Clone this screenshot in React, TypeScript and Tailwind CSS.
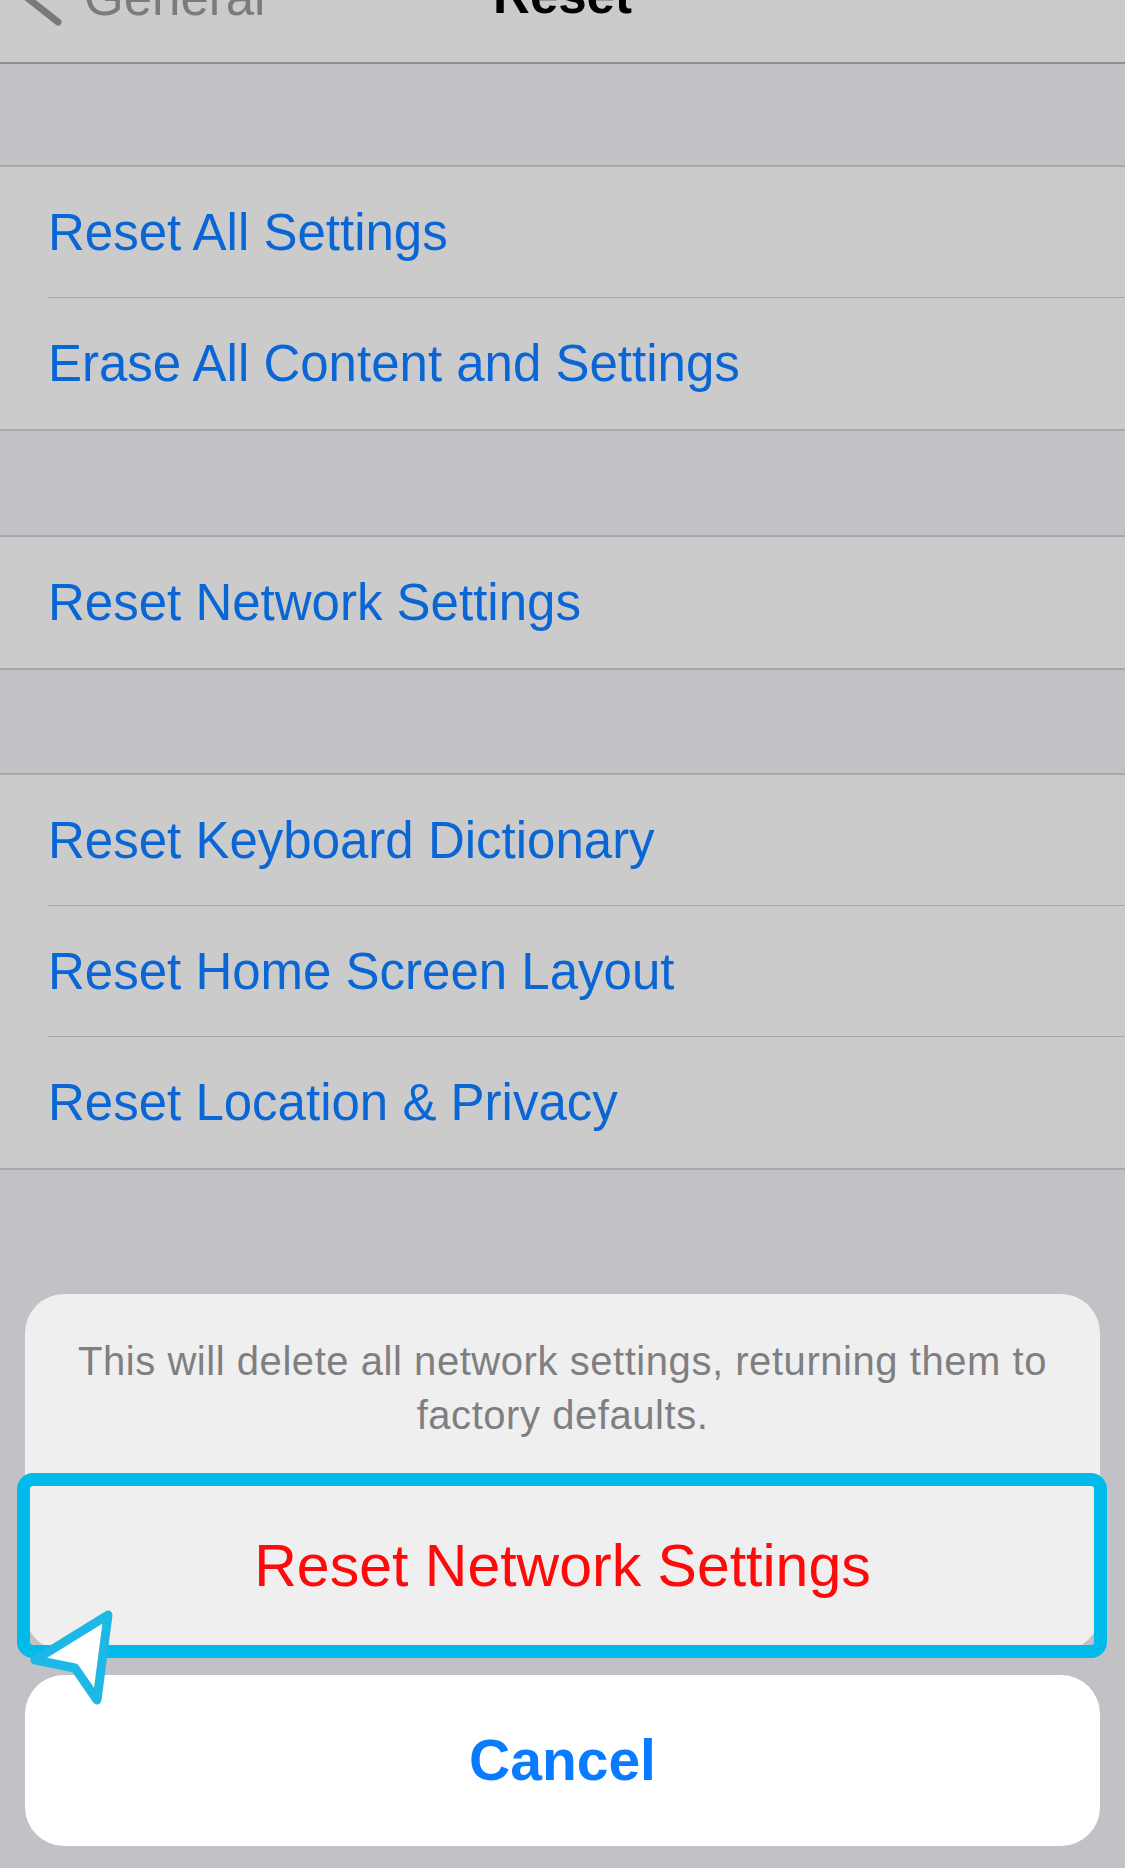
import React from 'react';

const FONT = { fontFamily: '"Liberation Sans", Arial, sans-serif' };

function Row({ label, last }: { label: string; last?: boolean }) {
  return (
    <div className="pl-[48px] bg-[#cbcbcb]">
      <div
        className={
          last
            ? 'h-[131px] flex items-center text-[51px] leading-none text-[#0a66d4]'
            : 'h-[131px] flex items-center text-[51px] leading-none text-[#0a66d4] border-b-[1.5px] border-[#a6a6a8]'
        }
      >
        {label}
      </div>
    </div>
  );
}

function Group({ rows }: { rows: string[] }) {
  return (
    <div className="border-y-2 border-[#a8a8aa]">
      {rows.map((r, i) => (
        <Row key={r} label={r} last={i === rows.length - 1} />
      ))}
    </div>
  );
}

export default function App() {
  return (
    <div className="relative w-[1125px] h-[1868px] overflow-hidden bg-[#c2c1c6]" style={FONT}>
      {/* nav bar, scrolled mostly out of view */}
      <div className="h-[64px] bg-[#cbcbcb] border-b-2 border-[#8f8f91] overflow-hidden">
        <div className="grid grid-cols-[1fr_auto_1fr] items-start">
          <div className="flex items-start">
            <svg width="70" height="30" viewBox="0 0 70 30" className="shrink-0">
              <path d="M60 -36 L25 -4 L58 22" fill="none" stroke="#7a7a7c" strokeWidth="7" strokeLinecap="round" strokeLinejoin="round" />
            </svg>
            <span className="ml-[14px] mt-[-28px] text-[51px] leading-[51px] text-[#7b7b7d]">General</span>
          </div>
          <span className="mt-[-30px] text-[51px] leading-[51px] font-bold text-black">Reset</span>
          <div />
        </div>
      </div>

      <div className="mt-[101px]">
        <Group rows={['Reset All Settings', 'Erase All Content and Settings']} />
      </div>
      <div className="mt-[104px]">
        <Group rows={['Reset Network Settings']} />
      </div>
      <div className="mt-[103px]">
        <Group rows={['Reset Keyboard Dictionary', 'Reset Home Screen Layout', 'Reset Location & Privacy']} />
      </div>

      {/* action sheet */}
      <div className="absolute left-[25px] right-[25px] bottom-[22px] flex flex-col gap-[24px]">
        <div className="rounded-[39px] bg-[#efeff0] overflow-hidden">
          <div className="pt-[40px] pb-[38px] px-[36px] text-center text-[40px] leading-[54px] tracking-[0.55px] text-[#7f7f81]">
            This will delete all network settings, returning them to factory defaults.
          </div>
          <div className="h-[171px] border-t border-[#cfcfd1] flex items-center justify-center text-[59px] leading-none text-[#fe0a0a]">
            Reset Network Settings
          </div>
        </div>
        <div className="h-[171px] rounded-[39px] bg-white flex items-center justify-center text-[57px] leading-none font-bold text-[#0a7aff]">
          Cancel
        </div>
      </div>

      {/* highlight annotation */}
      <div className="absolute left-[17px] top-[1473px] w-[1090px] h-[185px] rounded-[16px] border-[13px] border-[#00bbea]" />
      <svg className="absolute left-[20px] top-[1600px]" width="110" height="120" viewBox="0 0 110 120">
        <path d="M15 60 L88 15 L77 100 L55 68 Z" fill="#ffffff" stroke="#1db8e6" strokeWidth="9" strokeLinejoin="round" />
      </svg>
    </div>
  );
}
